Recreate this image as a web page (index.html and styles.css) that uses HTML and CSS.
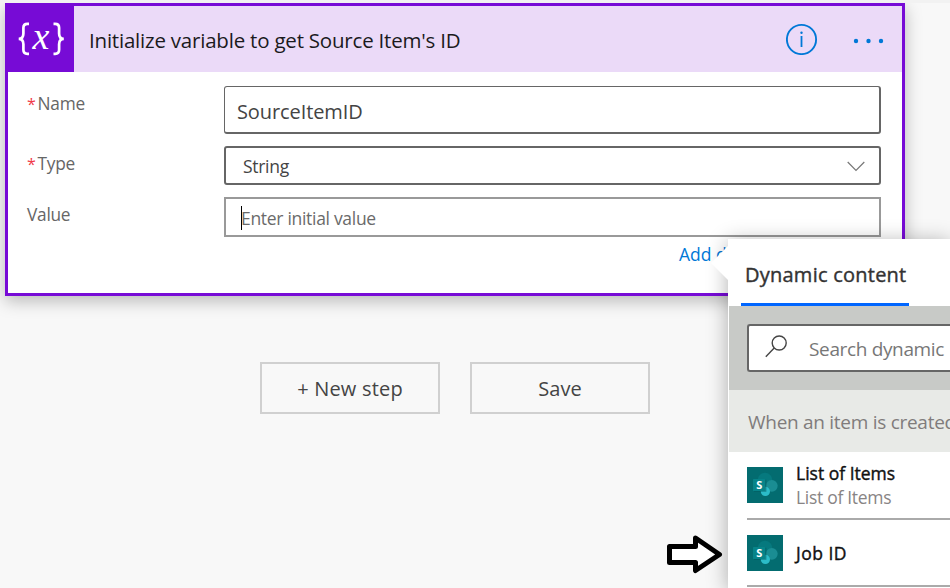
FILE: index.html
```html
<!DOCTYPE html>
<html lang="en">
<head>
<meta charset="utf-8">
<title>Initialize variable</title>
<link rel="stylesheet" href="styles.css">
</head>
<body>
<svg width="0" height="0" class="defs" aria-hidden="true">
  <symbol id="sharepoint" viewBox="0 0 36 36">
    <rect width="36" height="36" fill="#036c70"/>
    <circle cx="18" cy="13.200" r="7.400" fill="#06797e"/>
    <circle cx="24.800" cy="18.800" r="5.900" fill="#1a8d93"/>
    <circle cx="18.400" cy="24.400" r="4.600" fill="#2bbcc8"/>
    <rect x="7" y="12.800" width="12.400" height="12" fill="#02585c" opacity=".5"/>
    <rect x="6" y="12" width="12.200" height="12" rx=".6" fill="#078489"/>
    <text x="12.300" y="22" text-anchor="middle" class="sp-letter">S</text>
  </symbol>
</svg>
<main class="canvas">
  <section class="card">
    <header class="card-header">
      <div class="card-icon">
        <svg width="66" height="66" viewBox="0 0 66 66">
          <g fill="none" stroke="#fff" stroke-width="2.7">
            <path d="M21 17.800h-1.600q-4 0-4 4v5.600q0 5.400-4.700 5.400q4.700 0 4.700 5.400v5.600q0 4 4 4H21"/>
            <path d="M45.500 17.800h1.600q4 0 4 4v5.600q0 5.400 4.700 5.400q-4.700 0-4.700 5.400v5.600q0 4-4 4h-1.600"/>
          </g>
          <text x="33" y="42.500" text-anchor="middle" class="var-x">x</text>
        </svg>
      </div>
      <h1 class="card-title">Initialize variable to get Source Item's ID</h1>
      <svg class="info" width="32" height="32" viewBox="0 0 32 32">
        <circle cx="15.500" cy="16.500" r="14.600" fill="none" stroke="#0078d7" stroke-width="1.900"/>
        <path d="M15.500 13v11" stroke="#0078d7" stroke-width="1.800"/>
        <circle cx="15.500" cy="9.800" r="1.200" fill="#0078d7"/>
      </svg>
      <svg class="more" width="32" height="6" viewBox="0 0 32 6" fill="#0078d7">
        <circle cx="3" cy="3" r="2.200"/><circle cx="15.500" cy="3" r="2.200"/><circle cx="28" cy="3" r="2.200"/>
      </svg>
    </header>
    <div class="fields">
      <label class="label"><span class="req">*</span>Name</label>
      <div class="input name-input"><span>SourceItemID</span></div>
      <label class="label"><span class="req">*</span>Type</label>
      <div class="input type-input"><span>String</span>
        <svg width="18" height="11" viewBox="0 0 18 11"><path d="M.7 1l8.300 8.300L17.300 1" fill="none" stroke="#777" stroke-width="1.200"/></svg>
      </div>
      <label class="label">Value</label>
      <div class="input value-input"><i class="caret"></i><span>Enter initial value</span></div>
    </div>
    <a class="add">Add dynamic content</a>
  </section>
  <div class="actions">
    <button class="btn"><span class="new">+ New step</span></button>
    <button class="btn"><span>Save</span></button>
  </div>
</main>

<aside class="panel">
  <svg class="beak" width="18" height="36" viewBox="0 0 18 36"><path d="M18 0v36L0 18z" fill="#fff"/></svg>
  <div class="tabs"><div class="tab"><span>Dynamic content</span></div></div>
  <div class="search-band">
    <div class="search">
      <svg width="23" height="23" viewBox="0 0 23 23" fill="none" stroke="#444" stroke-width="1.400"><circle cx="14.200" cy="8" r="7"/><path d="M9.200 13L.8 21.700"/></svg>
      <span>Search dynamic</span>
    </div>
  </div>
  <div class="group"><span>When an item is created</span></div>
  <div class="items">
    <div class="item">
      <svg width="36" height="36"><use href="#sharepoint"/></svg>
      <div class="item-text"><span class="item-title">List of Items</span><span class="item-sub">List of Items</span></div>
    </div>
    <div class="item second">
      <svg width="36" height="36"><use href="#sharepoint"/></svg>
      <div class="item-text"><span class="item-title job">Job ID</span></div>
    </div>
  </div>
</aside>
<svg class="arrow" width="58" height="40" viewBox="0 0 58 40"><path d="M3.500 12.500h26V4L53.500 20.500L29.500 36.500V28.500h-26z" fill="#fff" stroke="#000" stroke-width="5" stroke-linejoin="round"/></svg>
</body>
</html>
```

FILE: styles.css
```css
* { box-sizing: border-box; }
body {
  margin: 0;
  width: 950px;
  height: 588px;
  overflow: hidden;
  position: relative;
  background: #f8f8f8;
  font-family: "Open Sans", "Noto Sans", sans-serif;
  color: #333;
  white-space: nowrap;
}
.defs { position: absolute; }
.canvas { height: 588px; padding-left: 5px; border-top: 3px solid #f2f2f2; }
.card {
  width: 900px;
  height: 293px;
  border: 3px solid #770bd6;
  background: #fff;
  box-shadow: 0 5px 16px rgba(0, 0, 0, .26);
  clip-path: inset(0 -30px -30px -30px);
}
.card-header { display: flex; align-items: center; height: 66px; background: #ebdaf8; }
.card-icon { width: 66px; height: 66px; background: #770bd6; }
.var-x { font: italic 38px "Liberation Serif", serif; fill: #fff; }
.card-title {
  margin: 0 auto 0 15px;
  font-size: 20.5px;
  font-weight: 400;
  line-height: 28px;
  letter-spacing: -.21px;
  color: #1b1a1d;
  padding-top: 2px;
}
.info { margin-right: 35px; }
.more { margin-right: 17px; margin-top: 3px; }
.fields {
  display: grid;
  grid-template-columns: 197px 657px;
  grid-template-rows: 48px 39px 40px;
  row-gap: 12px;
  padding: 14px 0 0 19px;
}
.label { padding-top: 6px; font-size: 17.3px; line-height: 24px; color: #666; letter-spacing: -.25px; }
.req { color: #f03a48; font-size: 16px; margin-right: 2px; }
.input { display: flex; align-items: center; border: 2px solid #666; border-radius: 3px; background: #fff; }
.name-input { border-width: 1px 2px 2px 1px; padding: 3px 0 0 12px; font-size: 20px; letter-spacing: -.1px; color: #444; }
.type-input { padding: 1px 14px 0 17px; font-size: 17.5px; letter-spacing: -.3px; justify-content: space-between; color: #444; }
.value-input { border-color: #999; border-radius: 0; padding: 2px 0 0 13px; font-size: 17.5px; letter-spacing: -.3px; color: #6a6a6a; }
.caret { width: 1px; height: 24px; margin: -1px -1px 0 2px; background: #000; }
.add { display: block; margin: 5px 0 0 671px; font-size: 17.5px; line-height: 24px; color: #0078d7; }
.actions { display: flex; gap: 30px; margin: 66px 0 0 255px; }
.btn {
  width: 180px;
  height: 52px;
  padding: 0;
  border: 2px solid #d0d0d0;
  background: #f8f8f8;
  font: 20px "Open Sans", sans-serif;
  color: #444;
}
.new { letter-spacing: .2px; }
.panel {
  position: absolute;
  left: 728px;
  top: 239px;
  width: 222px;
  height: 349px;
  padding-left: 1px;
  background: #fff;
  box-shadow: 0 3px 20px rgba(0, 0, 0, .32);
}
.beak { position: absolute; left: -17px; top: 6px; }
.tabs { height: 67px; padding-left: 12px; }
.tab {
  width: 168px;
  height: 67px;
  padding: 21px 0 0 4px;
  border-bottom: 3px solid #0066ff;
  font-size: 20px;
  line-height: 30px;
  letter-spacing: .24px;
  -webkit-text-stroke: .4px #333;
}
.search-band { height: 84px; padding: 18px 0 18px 18px; background: #c8cac7; }
.search {
  display: flex;
  align-items: center;
  height: 48px;
  border: 2px solid #666;
  border-right: 0;
  border-radius: 3px 0 0 3px;
  background: #fff;
  padding-left: 16px;
  font-size: 19px;
  letter-spacing: -.35px;
  color: #777;
}
.search svg { margin: -3px 21px 0 0; flex: none; }
.search span { padding-top: 2px; }
.group {
  height: 62px;
  padding: 17px 0 0 19px;
  overflow: hidden;
  background: #e8eae7;
  font-size: 19px;
  line-height: 30px;
  letter-spacing: -.28px;
  color: #807c7c;
}
.items { padding-left: 18px; }
.item { display: flex; align-items: center; height: 68px; border-bottom: 2px solid #aaa; }
.item.second { height: 67px; }
.item-text { display: flex; flex-direction: column; margin-left: 13px; line-height: 24px; font-size: 17.5px; }
.item-title { color: #111; -webkit-text-stroke: .4px #111; }
.job { letter-spacing: .5px; }
.item-sub { color: #888484; letter-spacing: -.3px; }
.sp-letter { font: bold 11px "Open Sans", sans-serif; fill: #fff; }
.arrow { position: absolute; left: 666px; top: 534px; }
```
